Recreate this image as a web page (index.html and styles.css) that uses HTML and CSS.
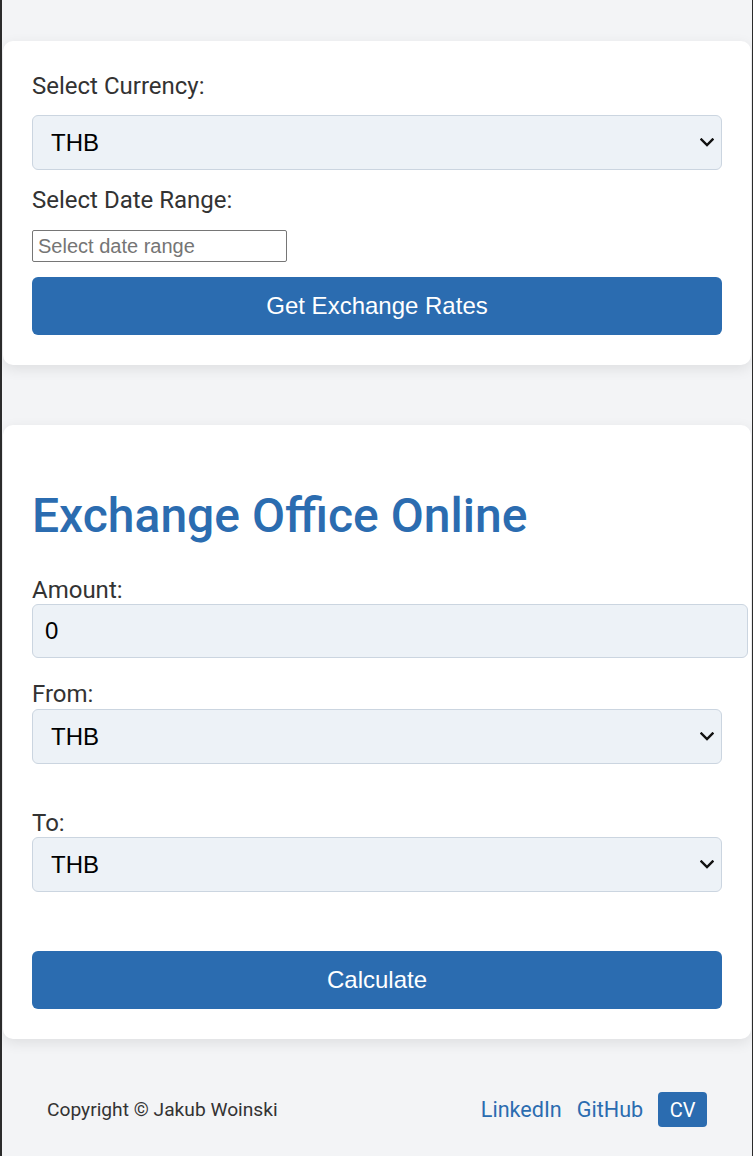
FILE: index.html
```html
<!DOCTYPE html>
<html lang="en">
<head>
<meta charset="utf-8">
<title>Exchange Office Online</title>
<link rel="stylesheet" href="styles.css">
</head>
<body>
<main class="page">
  <section class="card card-rates">
    <label class="label label-top" for="currency">Select Currency:</label>
    <div class="select-wrap">
      <select id="currency" class="field select">
        <option>THB</option>
      </select>
      <svg class="chevron" viewBox="0 0 14 9" width="14" height="9" aria-hidden="true"><path d="M1.5 1.5 L7 7 L12.5 1.5" fill="none" stroke="#111" stroke-width="2.4" stroke-linecap="square"/></svg>
    </div>
    <label class="label label-date" for="range">Select Date Range:</label>
    <input id="range" class="date" type="text" placeholder="Select date range">
    <button class="btn btn-rates" type="button">Get Exchange Rates</button>
  </section>

  <section class="card card-calc">
    <h1 class="title">Exchange Office Online</h1>
    <label class="label" for="amount">Amount:</label>
    <input id="amount" class="field amount" type="text" value="0">
    <label class="label label-from" for="from">From:</label>
    <div class="select-wrap">
      <select id="from" class="field select">
        <option>THB</option>
      </select>
      <svg class="chevron" viewBox="0 0 14 9" width="14" height="9" aria-hidden="true"><path d="M1.5 1.5 L7 7 L12.5 1.5" fill="none" stroke="#111" stroke-width="2.4" stroke-linecap="square"/></svg>
    </div>
    <label class="label label-to" for="to">To:</label>
    <div class="select-wrap">
      <select id="to" class="field select">
        <option>THB</option>
      </select>
      <svg class="chevron" viewBox="0 0 14 9" width="14" height="9" aria-hidden="true"><path d="M1.5 1.5 L7 7 L12.5 1.5" fill="none" stroke="#111" stroke-width="2.4" stroke-linecap="square"/></svg>
    </div>
    <button class="btn btn-calc" type="button">Calculate</button>
  </section>
</main>
<footer class="footer">
  <span class="copy">Copyright © Jakub Woinski</span>
  <nav class="links">
    <a class="link" href="#">LinkedIn</a>
    <a class="link" href="#">GitHub</a>
    <a class="cv" href="#">CV</a>
  </nav>
</footer>
</body>
</html>
```

FILE: styles.css
```css
html, body {
  margin: 0;
  padding: 0;
}
body {
  background: #f3f4f6;
  border-left: 2px solid #2b2b2b;
  border-right: 1px solid #2b2b2b;
  min-height: 1156px;
  box-sizing: border-box;
  font-family: Roboto, "Liberation Sans", sans-serif;
  color: #333;
}
.page {
  display: flex;
  flex-direction: column;
  gap: 60px;
  padding: 41px 1px 0 1px;
}
.card {
  background: #fff;
  border-radius: 10px;
  box-shadow: 0 4px 14px rgba(0, 0, 0, 0.09);
  padding: 30px 29px 30px 29px;
  display: flex;
  flex-direction: column;
  align-items: flex-start;
}
.label {
  font-size: 24px;
  line-height: 30px;
  color: #333;
}
.label-top { margin-bottom: 14px; }
.label-date { margin-top: 15px; margin-bottom: 15px; }
.field {
  font-family: "Liberation Sans", Arial, sans-serif;
  font-size: 24px;
  color: #000;
  background: #edf2f7;
  border: 1px solid #cbd5e0;
  border-radius: 6px;
}
.select-wrap {
  position: relative;
  width: 100%;
}
.select {
  display: block;
  width: 100%;
  height: 55px;
  box-sizing: border-box;
  padding: 0 14px 0 18px;
  appearance: none;
  -webkit-appearance: none;
}
.chevron {
  position: absolute;
  right: 8px;
  top: 23px;
  pointer-events: none;
}
.date {
  width: 255px;
  height: 32px;
  box-sizing: border-box;
  font-family: "Liberation Sans", Arial, sans-serif;
  font-size: 20px;
  padding: 0 5px;
  border: 1px solid #767676;
  border-radius: 2px;
  background: #fff;
  margin-bottom: 15px;
}
.date::placeholder { color: #757575; }
.btn {
  width: 100%;
  height: 58px;
  border: none;
  border-radius: 6px;
  background: #2b6cb0;
  color: #fff;
  font-family: "Liberation Sans", Arial, sans-serif;
  font-size: 24px;
}
.title {
  font-size: 48px;
  font-weight: 500;
  line-height: 58px;
  color: #2b6cb0;
  margin: 32px 0 32px 0;
}
.card-calc .label {
  line-height: 26px;
  margin-bottom: 1px;
}
.amount {
  width: 100%;
  box-sizing: content-box;
  height: 52px;
  padding: 0 12px;
}
.card-calc .label-from { margin-top: 23px; margin-bottom: 2px; }
.card-calc .label-to { margin-top: 46px; margin-bottom: 1px; }
.btn-calc { margin-top: 59px; }
.footer {
  display: flex;
  justify-content: space-between;
  align-items: center;
  padding: 53px 45px 29px 45px;
}
.copy {
  font-size: 19.2px;
  color: #333;
}
.links {
  display: flex;
  align-items: center;
  gap: 15px;
}
.link {
  font-size: 21.6px;
  color: #2b6cb0;
  text-decoration: none;
}
.cv {
  display: flex;
  align-items: center;
  height: 35px;
  padding: 0 11.5px;
  border-radius: 4px;
  background: #2b6cb0;
  color: #fff;
  font-size: 20px;
  text-decoration: none;
}
```
